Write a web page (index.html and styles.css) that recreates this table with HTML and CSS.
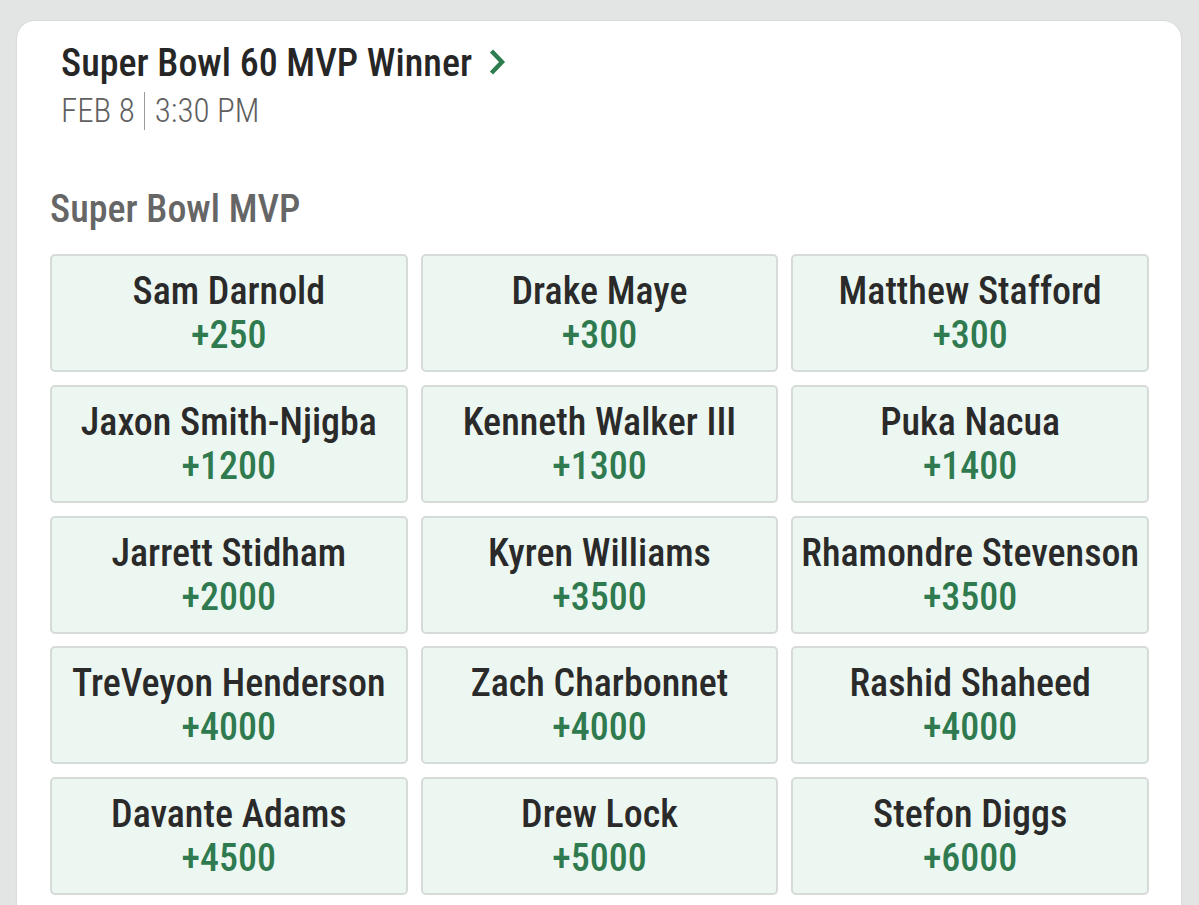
FILE: index.html
```html
<!DOCTYPE html>
<html>
<head>
<meta charset="utf-8">
<link rel="stylesheet" href="styles.css">
</head>
<body>
<div class="card">
  <div class="event">
    <div class="event-title">Super Bowl 60 MVP Winner
      <svg class="chev" width="18" height="26" viewBox="0 0 18 26"><path d="M3.5 2 L14 13 L3.5 24" fill="none" stroke="#2e7d4f" stroke-width="4.4" stroke-linejoin="miter"/></svg>
    </div>
    <div class="event-time"><span>FEB 8</span><span class="sep"></span><span>3:30 PM</span></div>
  </div>
  <div class="market-title">Super Bowl MVP</div>
  <div class="grid">
    <div class="cell"><div class="name">Sam Darnold</div><div class="odds">+250</div></div>
    <div class="cell"><div class="name">Drake Maye</div><div class="odds">+300</div></div>
    <div class="cell"><div class="name">Matthew Stafford</div><div class="odds">+300</div></div>
    <div class="cell"><div class="name">Jaxon Smith-Njigba</div><div class="odds">+1200</div></div>
    <div class="cell"><div class="name">Kenneth Walker III</div><div class="odds">+1300</div></div>
    <div class="cell"><div class="name">Puka Nacua</div><div class="odds">+1400</div></div>
    <div class="cell"><div class="name">Jarrett Stidham</div><div class="odds">+2000</div></div>
    <div class="cell"><div class="name">Kyren Williams</div><div class="odds">+3500</div></div>
    <div class="cell"><div class="name">Rhamondre Stevenson</div><div class="odds">+3500</div></div>
    <div class="cell"><div class="name">TreVeyon Henderson</div><div class="odds">+4000</div></div>
    <div class="cell"><div class="name">Zach Charbonnet</div><div class="odds">+4000</div></div>
    <div class="cell"><div class="name">Rashid Shaheed</div><div class="odds">+4000</div></div>
    <div class="cell"><div class="name">Davante Adams</div><div class="odds">+4500</div></div>
    <div class="cell"><div class="name">Drew Lock</div><div class="odds">+5000</div></div>
    <div class="cell"><div class="name">Stefon Diggs</div><div class="odds">+6000</div></div>
  </div>
</div>
</body>
</html>
```
FILE: styles.css
```css
html, body {
  margin: 0;
  padding: 0;
  background: #e3e5e4;
  height: 905px;
  overflow: hidden;
}
body {
  font-family: "Roboto Condensed", Roboto, "Liberation Sans", sans-serif;
  font-stretch: condensed;
}
.card {
  margin: 21px 0 0 17px;
  width: 1164px;
  height: 1000px;
  background: #fff;
  border-radius: 18px;
  box-shadow: 0 0 0 1px #d9dcda, 0 1px 3px rgba(0,0,0,0.08);
  padding: 20px 32px 0 33px;
  box-sizing: border-box;
}
.event {
  padding-left: 11px;
}
.event-title {
  font-size: 38px;
  line-height: 44px;
  font-weight: 500;
  color: #262626;
  display: flex;
  align-items: center;
  gap: 16px;
}
.chev {
  display: block;
  margin-top: -3px;
}
.event-time {
  display: flex;
  align-items: center;
  font-size: 33px;
  line-height: 40px;
  font-weight: 300;
  color: #5f5f5f;
  margin-top: 6px;
}
.sep {
  width: 1px;
  height: 38px;
  background: #9a9a9a;
  margin: 0 10px 0 9px;
}
.market-title {
  margin-top: 58px;
  font-size: 38px;
  line-height: 40px;
  font-weight: 500;
  color: #666;
}
.grid {
  margin-top: 25px;
  display: grid;
  grid-template-columns: repeat(3, 1fr);
  column-gap: 13px;
  row-gap: 12.75px;
  width: 1099px;
}
.cell {
  height: 118px;
  box-sizing: border-box;
  border: 2px solid #d6dbd8;
  border-radius: 5px;
  background: #edf7f1;
  display: flex;
  flex-direction: column;
  align-items: center;
  justify-content: center;
  white-space: nowrap;
}
.name {
  font-size: 38px;
  line-height: 44px;
  font-weight: 500;
  color: #2a2a2a;
}
.odds {
  font-size: 38px;
  line-height: 44px;
  font-weight: 500;
  color: #2f7a4f;
}
```
